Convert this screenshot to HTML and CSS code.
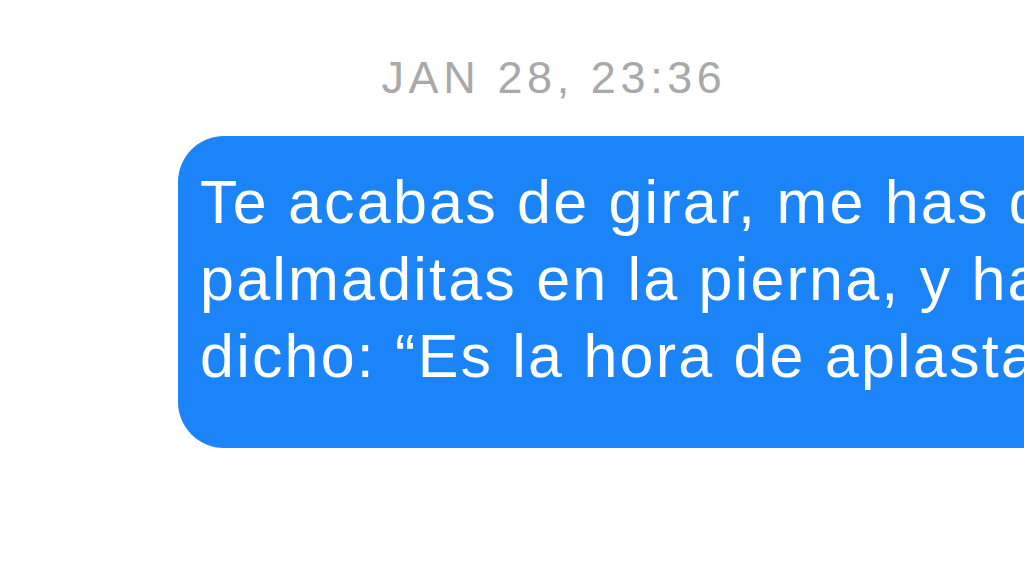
FILE: index.html
```html
<!DOCTYPE html>
<html lang="es">
<head>
    <meta charset="UTF-8">
    <meta name="viewport" content="width=device-width, initial-scale=1.0">
    <title>Mensajes</title>
    <link rel="stylesheet" href="styles.css">
</head>
<body>

    <div class="chat">
        <!-- Timestamp -->
        <div class="timestamp">JAN 28, 23:36</div>

        <!-- Sent message -->
        <div class="bubble">
            Te acabas de girar, me has dado<br>
            palmaditas en la pierna, y has<br>
            dicho: “Es la hora de aplastarte”
        </div>
    </div>

</body>
</html>
```

FILE: styles.css
```css
body {
    margin: 0;
    background: #ffffff;
    font-family: "Liberation Sans", Arial, sans-serif;
    overflow: hidden;
}

.chat {
    width: 1108px;
    padding-top: 52px;
}

.timestamp {
    text-align: center;
    color: #a9a9a9;
    font-size: 45px;
    letter-spacing: 4.6px;
    line-height: 52px;
}

.bubble {
    margin-top: 32px;
    margin-left: 178px;
    width: 1000px;
    padding: 28px 22px 53px 22px;
    background: #1b84f9;
    color: #ffffff;
    font-size: 61px;
    letter-spacing: 2.2px;
    line-height: 77px;
    white-space: nowrap;
    border-radius: 46px;
}
```
